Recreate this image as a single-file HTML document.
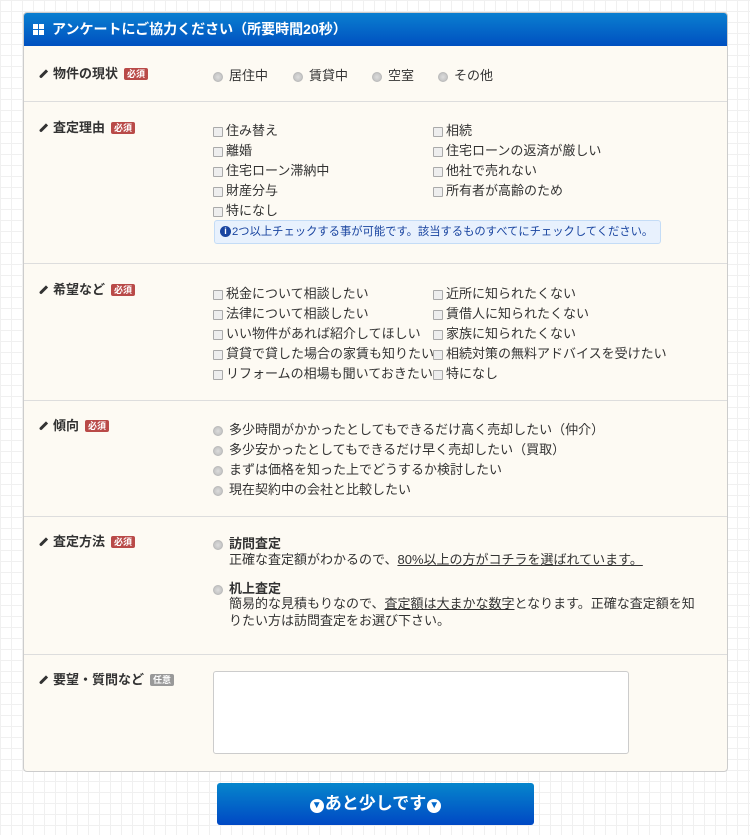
<!DOCTYPE html>
<html><head><meta charset="utf-8"><style>
*{margin:0;padding:0;box-sizing:border-box}
body{width:750px;height:835px;overflow:hidden;font-family:"Liberation Sans","Noto Sans CJK JP",sans-serif;font-size:13px;color:#333;
background-color:#fff;background-image:linear-gradient(#f0f0f0 1px,transparent 1px),linear-gradient(90deg,#f0f0f0 1px,transparent 1px);background-size:11px 11px;position:relative}
.panel{position:absolute;left:23px;top:12px;width:705px;height:760px;background:#fdfaf3;border:1px solid #ccc;border-radius:4px;overflow:hidden}
.hd{height:33px;background:linear-gradient(#0a7fd0,#0050c0);color:#fff;font-weight:bold;font-size:14px;line-height:33px;padding-left:28px;position:relative}
.hd i{position:absolute;left:9px;top:11px;width:11px;height:11px;background:linear-gradient(90deg,transparent 5px,#0a6ccb 5px,#0a6ccb 6px,transparent 6px),linear-gradient(transparent 5px,#0a6ccb 5px,#0a6ccb 6px,transparent 6px),#fff}
.sep{position:absolute;left:0;width:703px;height:1px;background:#ddd}
.a{position:absolute;line-height:20px;white-space:nowrap}
.lb{font-weight:bold;padding-left:13px}
.lb:before{content:"";position:absolute;left:2px;top:5px;width:3px;height:10px;background:#333;transform:rotate(45deg);border-radius:0 0 2px 2px}
.req{display:inline-block;background:#b94a48;color:#fff;font-size:9px;line-height:12px;padding:0 3px;border-radius:2px;margin-left:6px;vertical-align:1px}
.opt{background:#999}
.cb{padding-left:13px}
.cb:before{content:"";position:absolute;left:0;top:6px;width:8px;height:8px;border:1px solid #aaa;background:#eee;border-radius:1px}
.rd{padding-left:16px}
.rd:before{content:"";position:absolute;left:0;top:6px;width:8px;height:8px;border:1px solid #bbb;background:radial-gradient(#ddd,#bbb);border-radius:50%}
.info{position:absolute;left:190px;top:207px;width:447px;height:24px;background:#e8f1fd;border:1px solid #c4dcf6;border-radius:3px;color:#1a45a0;font-size:11.3px;line-height:22px;padding-left:17px;white-space:nowrap;overflow:hidden}
.info:before{content:"i";position:absolute;left:5px;top:5px;width:11px;height:11px;border-radius:50%;background:#1a45a0;color:#fff;font-size:9px;line-height:11px;text-align:center;font-weight:bold}
u{text-decoration:underline}
.ta{position:absolute;left:189px;top:658px;width:416px;height:83px;background:#fff;border:1px solid #ccc;border-radius:3px}
.btn{position:absolute;left:217px;top:783px;width:317px;height:42px;border-radius:3px;background:linear-gradient(#0686cc,#0048c4);color:#fff;font-size:17px;font-weight:bold;text-align:center;line-height:42px}
.ar{display:inline-block;width:14px;height:14px;border-radius:50%;background:#fff;color:#0066c8;font-size:10px;line-height:14px;vertical-align:1px;margin:0 1px}
</style></head><body>
<div class="panel">
<div class="hd"><i></i>アンケートにご協力ください（所要時間20秒）</div>
<div class="a lb" style="left:16px;top:51px">物件の現状<span class="req">必須</span></div>
<div class="a rd" style="left:189px;top:53px">居住中</div>
<div class="a rd" style="left:269px;top:53px">賃貸中</div>
<div class="a rd" style="left:348px;top:53px">空室</div>
<div class="a rd" style="left:414px;top:53px">その他</div>
<div class="sep" style="top:88px"></div>
<div class="a lb" style="left:16px;top:105px">査定理由<span class="req">必須</span></div>
<div class="a cb" style="left:189px;top:108px">住み替え</div>
<div class="a cb" style="left:189px;top:128px">離婚</div>
<div class="a cb" style="left:189px;top:148px">住宅ローン滞納中</div>
<div class="a cb" style="left:189px;top:168px">財産分与</div>
<div class="a cb" style="left:189px;top:188px">特になし</div>
<div class="a cb" style="left:409px;top:108px">相続</div>
<div class="a cb" style="left:409px;top:128px">住宅ローンの返済が厳しい</div>
<div class="a cb" style="left:409px;top:148px">他社で売れない</div>
<div class="a cb" style="left:409px;top:168px">所有者が高齢のため</div>
<div class="info">2つ以上チェックする事が可能です。該当するものすべてにチェックしてください。</div>
<div class="sep" style="top:250px"></div>
<div class="a lb" style="left:16px;top:267px">希望など<span class="req">必須</span></div>
<div class="a cb" style="left:189px;top:271px">税金について相談したい</div>
<div class="a cb" style="left:189px;top:291px">法律について相談したい</div>
<div class="a cb" style="left:189px;top:311px">いい物件があれば紹介してほしい</div>
<div class="a cb" style="left:189px;top:331px">貸貸で貸した場合の家賃も知りたい</div>
<div class="a cb" style="left:189px;top:351px">リフォームの相場も聞いておきたい</div>
<div class="a cb" style="left:409px;top:271px">近所に知られたくない</div>
<div class="a cb" style="left:409px;top:291px">賃借人に知られたくない</div>
<div class="a cb" style="left:409px;top:311px">家族に知られたくない</div>
<div class="a cb" style="left:409px;top:331px">相続対策の無料アドバイスを受けたい</div>
<div class="a cb" style="left:409px;top:351px">特になし</div>
<div class="sep" style="top:387px"></div>
<div class="a lb" style="left:16px;top:403px">傾向<span class="req">必須</span></div>
<div class="a rd" style="left:189px;top:407px">多少時間がかかったとしてもできるだけ高く売却したい（仲介）</div>
<div class="a rd" style="left:189px;top:427px">多少安かったとしてもできるだけ早く売却したい（買取）</div>
<div class="a rd" style="left:189px;top:447px">まずは価格を知った上でどうするか検討したい</div>
<div class="a rd" style="left:189px;top:467px">現在契約中の会社と比較したい</div>
<div class="sep" style="top:503px"></div>
<div class="a lb" style="left:16px;top:519px">査定方法<span class="req">必須</span></div>
<div class="a rd" style="left:189px;top:521px;font-weight:bold">訪問査定</div>
<div class="a" style="left:205px;top:537px">正確な査定額がわかるので、<u>80%以上の方がコチラを選ばれています。</u></div>
<div class="a rd" style="left:189px;top:566px;font-weight:bold">机上査定</div>
<div class="a" style="left:205px;top:582px;white-space:normal;width:470px;line-height:17px">簡易的な見積もりなので、<u>査定額は大まかな数字</u>となります。正確な査定額を知りたい方は訪問査定をお選び下さい。</div>
<div class="sep" style="top:641px"></div>
<div class="a lb" style="left:16px;top:657px">要望・質問など<span class="req opt">任意</span></div>
<div class="ta"></div>
</div>
<div class="btn"><span class="ar">▼</span>あと少しです<span class="ar">▼</span></div>
</body></html>
